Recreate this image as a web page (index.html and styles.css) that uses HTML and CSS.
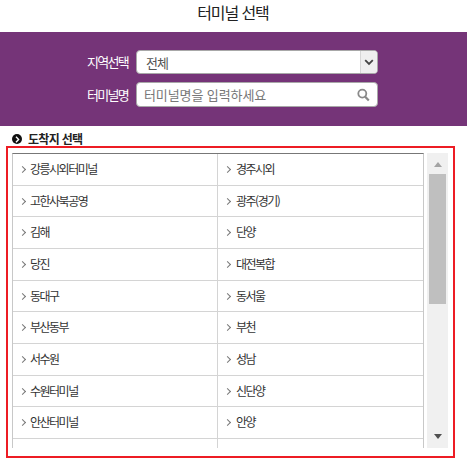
FILE: index.html
```html
<!DOCTYPE html>
<html lang="ko">
<head>
<meta charset="utf-8">
<title>터미널 선택</title>
<link rel="stylesheet" href="styles.css">
</head>
<body>
<h1 class="title">터미널 선택</h1>
<section class="search">
  <div class="field">
    <label class="label">지역선택</label>
    <div class="box">
      <span class="value">전체</span>
      <span class="drop"><svg width="10" height="7" viewBox="0 0 10 7"><path d="M1.2 1.2 5 5l3.8-3.8" fill="none" stroke="#444" stroke-width="1.8"/></svg></span>
    </div>
  </div>
  <div class="field">
    <label class="label">터미널명</label>
    <div class="box box-input">
      <span class="placeholder">터미널명을 입력하세요</span>
      <svg class="magnifier" width="13" height="14" viewBox="0 0 13 14"><circle cx="5.3" cy="5.6" r="4" fill="none" stroke="#8a8a8a" stroke-width="1.8"/><path d="M8.2 8.8 11.8 12.6" stroke="#8a8a8a" stroke-width="2.2"/></svg>
    </div>
  </div>
</section>
<h2 class="subtitle"><span class="bullet"><svg width="5" height="7" viewBox="0 0 5 7"><path d="M1 .8 3.6 3.5 1 6.2" fill="none" stroke="#fff" stroke-width="1.4"/></svg></span>도착지 선택</h2>
<div class="frame">
  <div class="list">
    <a class="item">강릉시외터미널</a><a class="item">경주시외</a>
    <a class="item">고한사북공영</a><a class="item">광주(경기)</a>
    <a class="item">김해</a><a class="item">단양</a>
    <a class="item">당진</a><a class="item">대전복합</a>
    <a class="item">동대구</a><a class="item">동서울</a>
    <a class="item">부산동부</a><a class="item">부천</a>
    <a class="item">서수원</a><a class="item">성남</a>
    <a class="item">수원터미널</a><a class="item">신단양</a>
    <a class="item">안산터미널</a><a class="item">안양</a>
    <a class="item"></a><a class="item"></a>
  </div>
  <div class="scrollbar">
    <span class="arrow arrow-up"></span>
    <span class="thumb"></span>
    <span class="arrow arrow-down"></span>
  </div>
</div>
</body>
</html>
```
FILE: styles.css
```css
* { box-sizing: border-box; }
html, body { margin: 0; padding: 0; background: #fff; }
body {
  width: 467px;
  height: 465px;
  overflow: hidden;
  font-family: "Noto Sans CJK KR", "Noto Sans", sans-serif;
  color: #333;
}
.title {
  margin: 0;
  height: 32px;
  line-height: 25px;
  padding-right: 1px;
  font-size: 16px;
  font-weight: 400;
  letter-spacing: -1.1px;
  text-align: center;
  color: #222;
}
.search {
  height: 94px;
  background: #753478;
  padding: 18px 89px 0 0;
  display: flex;
  flex-direction: column;
  gap: 8px;
  align-items: flex-end;
}
.field { display: flex; align-items: center; gap: 8px; }
.label { font-size: 13px; letter-spacing: -1.7px; color: #fff; line-height: 24px; }
.box {
  width: 242px;
  height: 24px;
  background: #fff;
  border: 1px solid #a8a8a8;
  border-radius: 4px;
  display: flex;
  align-items: center;
  justify-content: space-between;
  font-size: 13px;
}
.box-input { height: 25px; padding-right: 7px; }
.value { padding-left: 9px; color: #555; letter-spacing: -1px; }
.placeholder { padding-left: 7px; color: #777; letter-spacing: -.1px; }
.drop {
  width: 17px;
  height: 100%;
  background: #efefef;
  border-left: 1px solid #d6d6d6;
  border-radius: 0 3px 3px 0;
  display: flex;
  align-items: center;
  justify-content: center;
}
.subtitle {
  margin: 0;
  height: 20px;
  padding: 6px 0 0 12px;
  display: flex;
  align-items: center;
  gap: 6px;
  font-size: 12px;
  line-height: 14px;
  font-weight: 700;
  letter-spacing: -.7px;
  color: #222;
}
.bullet {
  width: 10px;
  height: 10px;
  background: #111;
  border-radius: 50%;
  display: flex;
  align-items: center;
  justify-content: center;
}
.frame {
  width: 449px;
  height: 312px;
  margin-left: 6px;
  border: 2px solid #ed1c24;
  padding: 5px 5px 8px 4px;
  display: flex;
  gap: 3px;
}
.list {
  width: 412px;
  height: 295px;
  overflow: hidden;
  border-top: 1px solid #777;
  border-left: 1px solid #c8c8c8;
  border-right: 1px solid #c8c8c8;
  display: grid;
  grid-template-columns: 205px 1fr;
  grid-auto-rows: 31.67px;
}
.item {
  position: relative;
  border-bottom: 1px solid #d4d4d4;
  padding-left: 17px;
  font-size: 12px;
  line-height: 30px;
  letter-spacing: -1.5px;
  color: #333;
}
.item:nth-child(odd) { border-right: 1px solid #d4d4d4; }
.item:nth-child(even) { padding-left: 18px; }
.item:not(:empty)::before {
  content: "";
  position: absolute;
  left: 7px;
  top: 13px;
  width: 4px;
  height: 4px;
  border-top: 1.5px solid #777;
  border-right: 1.5px solid #777;
  transform: rotate(45deg);
}
.scrollbar {
  width: 21px;
  height: 295px;
  background: #f0f0f0;
  display: flex;
  flex-direction: column;
  align-items: center;
  position: relative;
}
.thumb { width: 17px; height: 130px; background: #bfbfbf; position: absolute; top: 21px; }
.arrow { position: absolute; width: 0; height: 0; border-left: 4.5px solid transparent; border-right: 4.5px solid transparent; }
.arrow-up { top: 9px; border-bottom: 5px solid #a3a3a3; }
.arrow-down { bottom: 9px; border-top: 5px solid #505050; }
```
